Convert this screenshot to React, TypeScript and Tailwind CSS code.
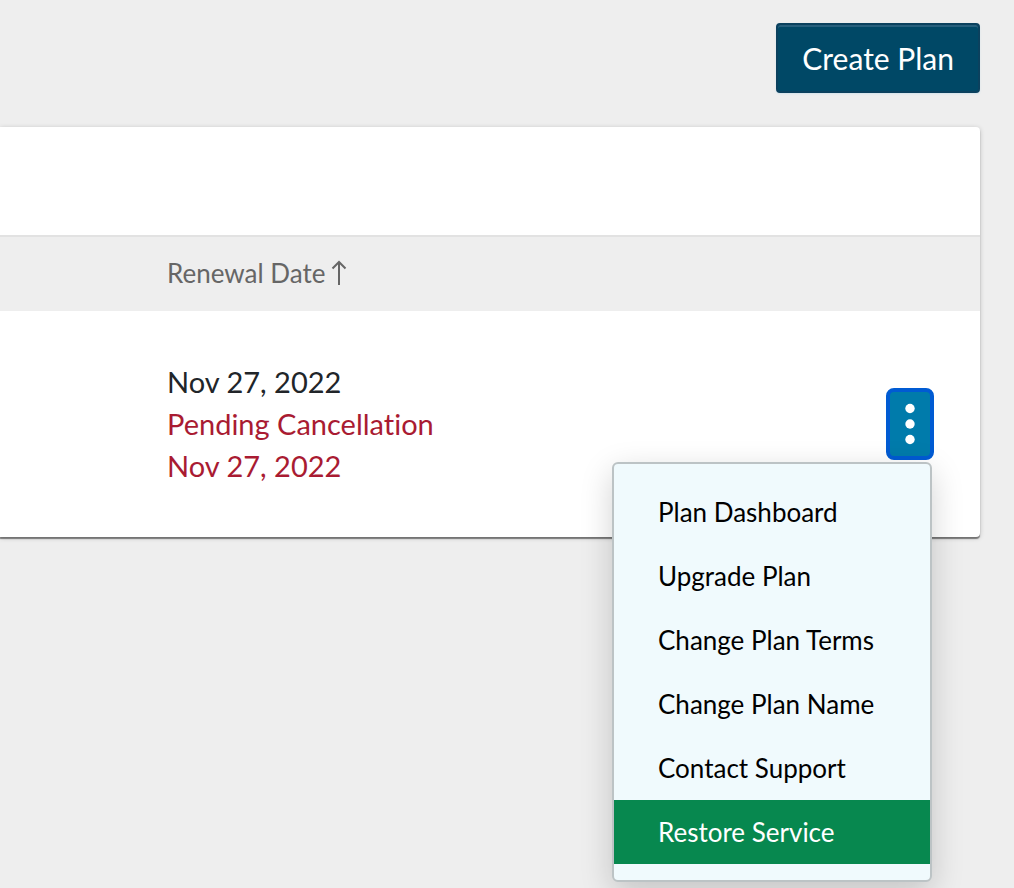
import { useState } from "react";
import clsx from "clsx";

const MENU_ITEMS = [
  "Plan Dashboard",
  "Upgrade Plan",
  "Change Plan Terms",
  "Change Plan Name",
  "Contact Support",
  "Restore Service",
];

function SortArrow() {
  return (
    <svg width="16" height="26" viewBox="0 0 16 26" fill="none" stroke="currentColor" strokeWidth="2" aria-hidden="true">
      <path d="M8 25V2M1.5 8.5 8 2l6.5 6.5" />
    </svg>
  );
}

function PlanActions() {
  const [open, setOpen] = useState(true);

  return (
    <div className="relative inline-block align-middle">
      <button
        type="button"
        aria-label="Plan actions"
        aria-expanded={open}
        onClick={() => setOpen(!open)}
        className="flex h-[72px] w-12 items-center justify-center rounded-lg border-4 border-[#005bd3] bg-[#007bab] text-white"
      >
        <svg width="10" height="42" viewBox="0 0 10 42" fill="currentColor" aria-hidden="true">
          <circle cx="5" cy="5.5" r="4.7" />
          <circle cx="5" cy="21" r="4.7" />
          <circle cx="5" cy="36.5" r="4.7" />
        </svg>
      </button>
      {open && (
        <ul
          role="menu"
          className="absolute top-full right-0.5 z-10 mt-0.5 w-80 rounded-md border-2 border-[#bcc3c5] bg-[#f0fafd] py-4 shadow-[0_10px_32px_rgba(0,0,0,0.18)]"
        >
          {MENU_ITEMS.map((item) => (
            <li key={item} role="none">
              <button
                type="button"
                role="menuitem"
                className={clsx(
                  "block h-16 w-full pl-11 text-left text-[26px]",
                  item === "Restore Service" ? "bg-[#07884f] text-white" : "text-black"
                )}
              >
                {item}
              </button>
            </li>
          ))}
        </ul>
      )}
    </div>
  );
}

export default function App() {
  return (
    <main className="min-h-screen bg-[#eeeeee] pt-[23px] pr-[34px] font-['Lato','Open_Sans',sans-serif] [font-variant-ligatures:none]">
      <div className="flex justify-end">
        <button
          type="button"
          className="h-[70px] rounded-sm border-2 border-[#0b415e] bg-[#004866] px-6 text-[30px] text-white shadow-[inset_0_2px_0_#265f7c,0_1px_2px_#d3e2ea]"
        >
          Create Plan
        </button>
      </div>

      <section className="mt-[34px] rounded-r-sm bg-white pt-[108px] shadow-[0_2px_1px_rgba(0,0,0,0.45),0_1px_5px_rgba(0,0,0,0.2)]">
        <table className="w-full border-collapse text-left">
          <thead>
            <tr className="h-[75px] border-t-2 border-[#e2e2e2] bg-[#eeeeee] text-[26px] text-[#666666]">
              <td className="w-[167px]" />
              <th scope="col" className="pb-0.5 font-normal">
                <button type="button" className="flex items-center gap-1.5">
                  Renewal Date
                  <SortArrow />
                </button>
              </th>
              <td />
            </tr>
          </thead>
          <tbody>
            <tr>
              <td />
              <td className="py-[50px] text-[29px] leading-[42px] text-[#212529]">
                <p>Nov 27, 2022</p>
                <p className="text-[#a91b32]">Pending Cancellation</p>
                <p className="text-[#a91b32]">Nov 27, 2022</p>
              </td>
              <td className="pr-[46px] text-right">
                <PlanActions />
              </td>
            </tr>
          </tbody>
        </table>
      </section>
    </main>
  );
}
